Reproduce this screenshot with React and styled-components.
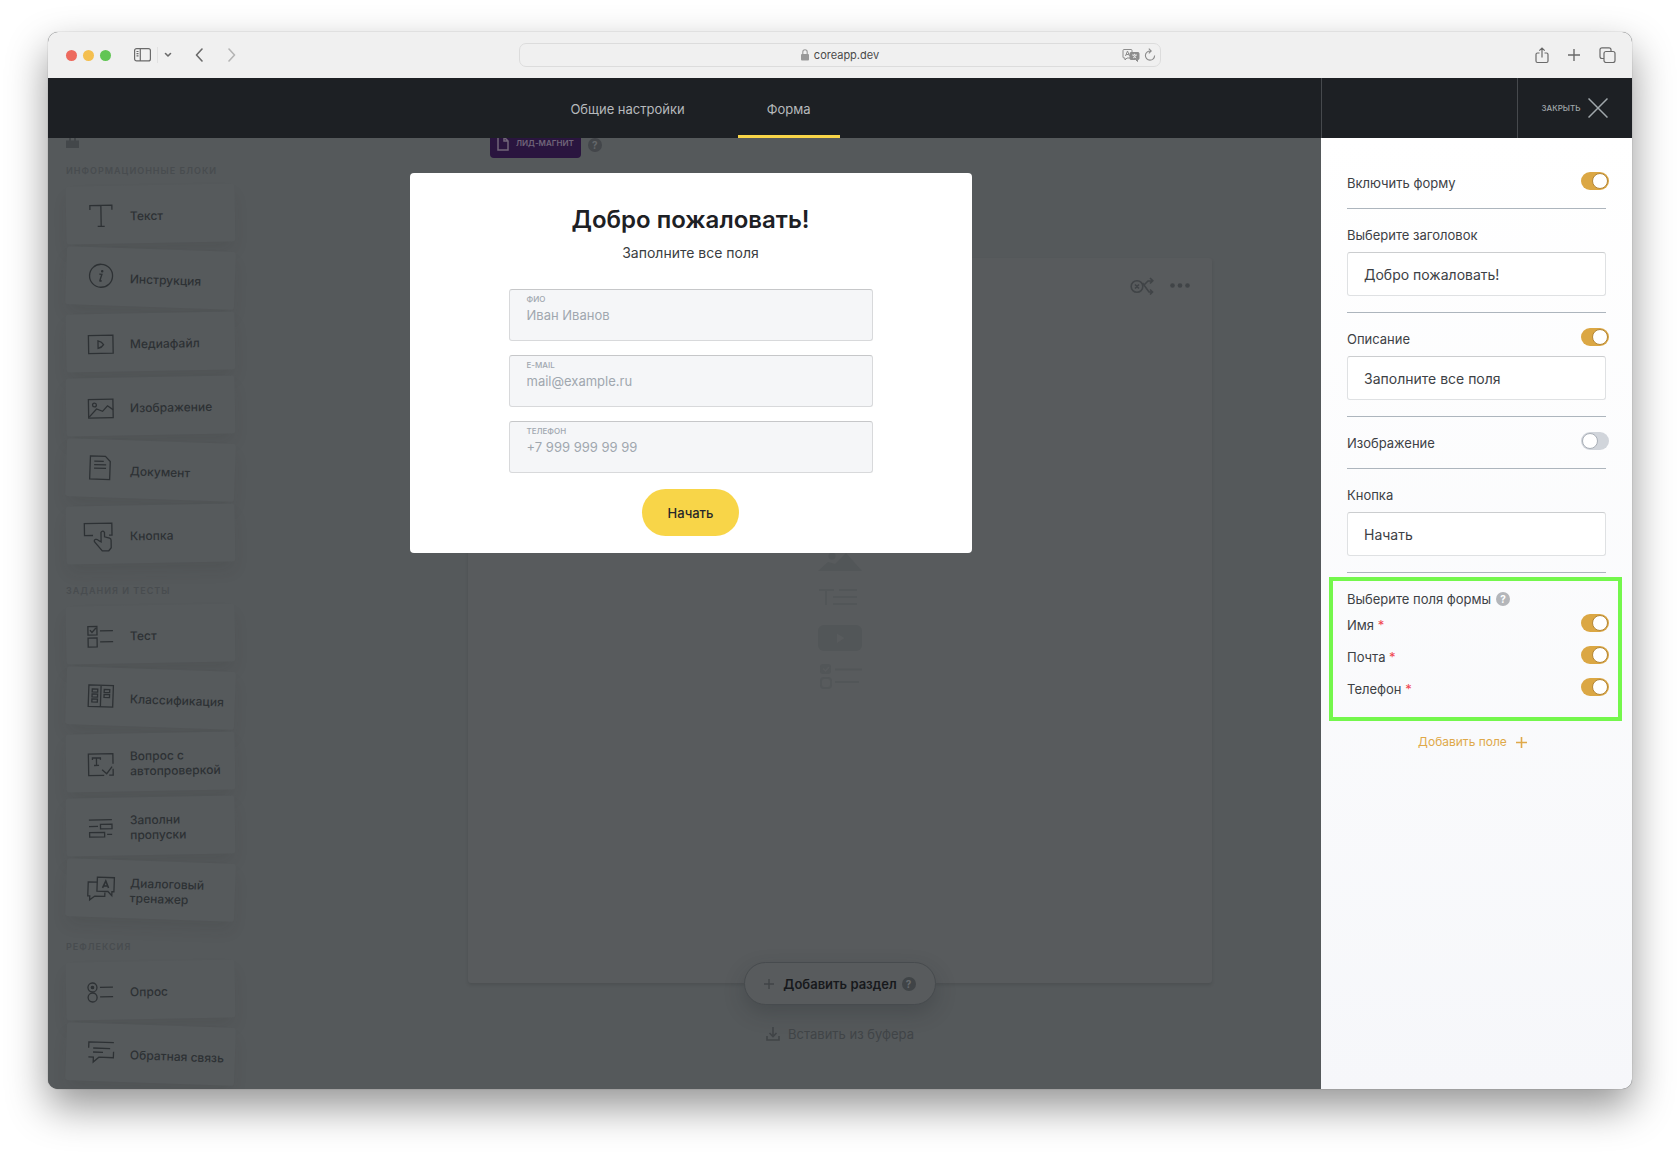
import React from "react";
import styled, { createGlobalStyle } from "styled-components";

const GlobalStyle = createGlobalStyle`
  *, *::before, *::after { box-sizing: border-box; }
  body { margin: 0; background: #ffffff; font-family: Inter, "Noto Sans", sans-serif; }
  button, input { font-family: inherit; }
`;

/* ---------- window ---------- */

const Desktop = styled.div`
  min-height: 100vh;
  padding: 32px 48px 64px;
  display: flex;
  flex-direction: column;
`;

const BrowserWindow = styled.div`
  flex: 1;
  display: flex;
  flex-direction: column;
  overflow: hidden;
  border-radius: 10px;
  background: #55595b;
  box-shadow: 0 0 1px rgba(0, 0, 0, 0.5), 0 18px 40px rgba(0, 0, 0, 0.42);
`;

const TitleBar = styled.div`
  height: 46px;
  display: grid;
  grid-template-columns: 1fr minmax(300px, 642px) 1fr;
  align-items: center;
  background: #f0f0f0;
`;

const BarGroup = styled.div`
  display: flex;
  align-items: center;
  justify-content: ${(p) => (p.$end ? "flex-end" : "flex-start")};
  gap: ${(p) => p.$gap}px;
  padding: 0 ${(p) => (p.$end ? 16 : 18)}px;
`;

const Cluster = styled.div`
  display: flex;
  align-items: center;
  gap: 6px;
`;

const Light = styled.span`
  width: 11px;
  height: 11px;
  border-radius: 50%;
  background: ${(p) => p.$color};
`;

const BarButton = styled.button`
  display: flex;
  padding: 0;
  border: 0;
  background: none;
  color: ${(p) => (p.$faint ? "#b4b4b4" : "#6a6a6a")};
`;

const BarRule = styled.span`
  width: 1px;
  height: 16px;
  background: #e2e2e2;
`;

const Address = styled.div`
  height: 24px;
  display: grid;
  grid-template-columns: 1fr auto 1fr;
  align-items: center;
  padding: 0 4px;
  border: 1px solid #dcdcdc;
  border-radius: 7px;
  color: #8c8c8c;
`;

const Host = styled.div`
  grid-column: 2;
  display: flex;
  align-items: center;
  gap: 5px;
  font-size: 11px;
  line-height: 16px;
  color: #4a4a4a;
`;

const AddressTools = styled.div`
  display: flex;
  justify-content: flex-end;
  align-items: center;
  gap: 4px;
`;

/* ---------- application header ---------- */

const Header = styled.header`
  height: 60px;
  display: flex;
  background: #1d2024;
`;

const Tabs = styled.nav`
  flex: 1;
  display: flex;
  justify-content: center;
  gap: 24px;
  padding-left: 12px;
`;

const Tab = styled.a`
  display: flex;
  align-items: center;
  padding: 4px 29px 0;
  border-bottom: 3px solid ${(p) => (p.$active ? "#f8d548" : "transparent")};
  font-size: 13px;
  line-height: 20px;
  color: #b6b9bc;
  text-decoration: none;
`;

const HeaderSide = styled.div`
  width: 311px;
  display: flex;
  justify-content: flex-end;
  border-left: 1px solid #46494d;
`;

const CloseButton = styled.button`
  width: 115px;
  display: flex;
  align-items: center;
  justify-content: center;
  gap: 8px;
  padding: 0;
  border: 0;
  border-left: 1px solid #46494d;
  background: none;
  font-size: 8px;
  font-weight: 500;
  color: #a0a7ab;
`;

/* ---------- body ---------- */

const Body = styled.div`
  flex: 1;
  display: flex;
`;

const Stage = styled.main`
  position: relative;
  flex: 1;
  display: flex;
  overflow: hidden;
  background: #55595b;
`;

const Sidebar = styled.aside`
  width: 311px;
  display: flex;
  flex-direction: column;
  gap: 20px;
  padding-left: 18px;
`;

const SidebarTop = styled.div`
  height: 5px;
  display: flex;
  color: #43474a;
`;

const Group = styled.section`
  width: 169px;
  display: flex;
  flex-direction: column;
  gap: 6px;
`;

const GroupTitle = styled.h2`
  margin: 0;
  font-size: 9px;
  line-height: 16px;
  font-weight: 600;
  letter-spacing: 1px;
  white-space: nowrap;
  color: #484c4f;
`;

const BlockCard = styled.button`
  height: 58px;
  display: flex;
  align-items: center;
  gap: 15px;
  padding: 2px 0 0 21px;
  border: 0;
  border-radius: 3px;
  background: #565a5c;
  box-shadow: 0 10px 16px -2px rgba(36, 40, 43, 0.1);
  font-size: 12px;
  line-height: 15px;
  font-weight: 500;
  text-align: left;
  white-space: pre-line;
  color: #2d3134;
  transform: rotate(${(p) => (p.$down ? 2 : -1)}deg);

  svg { flex: none; }
`;

const Workspace = styled.div`
  flex: 1;
  display: flex;
  flex-direction: column;
  align-items: center;
  padding: 0 109px;
`;

const LeadRow = styled.div`
  align-self: stretch;
  height: 20px;
  display: flex;
  align-items: flex-end;
  gap: 7px;
  padding-left: 22px;
`;

const LeadButton = styled.button`
  height: 30px;
  display: flex;
  align-items: center;
  gap: 7px;
  padding: 0 7px;
  border: 0;
  border-radius: 4px;
  background: #2a153f;
  font-size: 8px;
  font-weight: 600;
  color: #716579;
`;

const Hint = styled.span`
  width: 14px;
  height: 14px;
  display: flex;
  align-items: center;
  justify-content: center;
  border-radius: 50%;
  background: ${(p) => p.$bg};
  font-size: 10px;
  line-height: 14px;
  font-weight: 700;
  color: ${(p) => p.$color};
`;

const LeadHint = styled(Hint)`
  margin-bottom: 6px;
`;

const Canvas = styled.div`
  align-self: stretch;
  flex: 1;
  display: flex;
  flex-direction: column;
  margin-top: 100px;
  border-radius: 3px;
  background: #585b5d;
  box-shadow: 0 2px 3px rgba(40, 44, 47, 0.18);
`;

const CanvasTools = styled.div`
  height: 56px;
  display: flex;
  align-items: center;
  justify-content: flex-end;
  gap: 16px;
  padding: 0 22px;
  color: #404447;
`;

const Hints = styled.div`
  flex: 1;
  display: flex;
  flex-direction: column;
  align-items: center;
  justify-content: center;
  gap: 12px;
  padding-bottom: 62px;
  color: #525658;
`;

const CanvasFooter = styled.div`
  height: 106px;
  display: flex;
  flex-direction: column;
  align-items: center;
`;

const AddSection = styled.button`
  width: 192px;
  height: 43px;
  flex: none;
  display: flex;
  align-items: center;
  justify-content: center;
  gap: 5px;
  margin-top: -21px;
  border: 1px solid #474b4e;
  border-radius: 22px;
  background: #585b5d;
  box-shadow: 0 8px 20px rgba(36, 40, 43, 0.25);
  font-size: 13px;
  font-weight: 600;
  color: #17191c;

  svg { margin-right: 4px; color: #404447; }
`;

const Paste = styled.button`
  display: flex;
  align-items: center;
  gap: 8px;
  margin-top: 19px;
  padding: 0;
  border: 0;
  background: none;
  font-size: 13px;
  line-height: 20px;
  color: #404447;
`;

/* ---------- form dialog ---------- */

const Overlay = styled.div`
  position: absolute;
  inset: 0;
  display: flex;
  justify-content: center;
  align-items: flex-start;
  padding: 35px 0 0 12px;
`;

const Dialog = styled.form`
  width: 562px;
  display: flex;
  flex-direction: column;
  align-items: center;
  padding: 31px 99px 17px;
  border-radius: 4px;
  background: #ffffff;
`;

const DialogTitle = styled.h1`
  margin: 0;
  font-size: 24px;
  line-height: 32px;
  font-weight: 600;
  color: #1d2024;
`;

const DialogText = styled.p`
  margin: 7px 0 26px;
  font-size: 14px;
  line-height: 20px;
  color: #3a3d41;
`;

const Fields = styled.div`
  align-self: stretch;
  display: flex;
  flex-direction: column;
  gap: 14px;
`;

const Field = styled.label`
  height: 52px;
  display: flex;
  flex-direction: column;
  padding: 4px 17px;
  border: 1px solid #d8d9db;
  border-top-color: #c6c7c9;
  border-radius: 3px;
  background: #f5f6f8;
  font-size: 8px;
  line-height: 10px;
  font-weight: 500;
  color: #a0a7af;
`;

const FieldInput = styled.input`
  width: 100%;
  height: 22px;
  padding: 0;
  border: 0;
  outline: 0;
  background: none;
  font-size: 13px;
  line-height: 22px;
  color: #a0a7af;

  &::placeholder { color: #a0a7af; opacity: 1; }
`;

const StartButton = styled.button`
  width: 97px;
  height: 47px;
  margin-top: 16px;
  border: 0;
  border-radius: 24px;
  background: #f8d548;
  font-size: 13px;
  font-weight: 500;
  color: #26272a;
`;

/* ---------- settings panel ---------- */

const Panel = styled.aside`
  width: 311px;
  padding: 19px 26px 0;
  background: linear-gradient(#ffffff, #f6f7fa);
`;

const Section = styled.div`
  display: flex;
  flex-direction: column;
  gap: 7px;
  padding: 16px 0 ${(p) => (p.$bare ? 15 : 16)}px;
  border-bottom: 1px solid #adb5bd;
`;

const Row = styled.div`
  height: ${(p) => p.$height || 20}px;
  display: flex;
  align-items: center;
  justify-content: ${(p) => (p.$start ? "flex-start" : "space-between")};
  gap: 5px;
  font-size: 13px;
  line-height: 20px;
  color: #3d4145;
`;

const Required = styled.span`
  color: #f0454f;
`;

const Switch = styled.input`
  appearance: none;
  flex: none;
  width: 28px;
  height: 18px;
  display: flex;
  justify-content: flex-start;
  margin: 0 -3px 4px 0;
  padding: 1px;
  border-radius: 9px;
  background: #d1d5db;

  &::before {
    content: "";
    width: 16px;
    height: 16px;
    border: 1px solid #a9afb7;
    border-radius: 50%;
    background: #ffffff;
  }

  &:checked { justify-content: flex-end; background: #dba744; }
  &:checked::before { border-color: #b48636; }
`;

const TextBox = styled.input`
  width: 100%;
  height: 44px;
  padding: 0 16px;
  border: 1px solid #dfe1e3;
  border-top-color: #cbcdcf;
  border-radius: 3px;
  outline: 0;
  background: #ffffff;
  font-size: 14px;
  color: #3d4145;
`;

const Highlight = styled.div`
  margin: 4px -16px 0 -18px;
  padding: 8px 12px 12px 14px;
  border: 4px solid #74f74c;
`;

const AddField = styled.button`
  width: 100%;
  display: flex;
  align-items: center;
  justify-content: center;
  gap: 9px;
  margin-top: 11px;
  padding: 0 8px 0 0;
  border: 0;
  background: none;
  font-size: 12px;
  line-height: 20px;
  color: #dfa94a;
`;

/* ---------- icons ---------- */

const Icon = ({ w = 28, h = w, sw = 1.3, children }) => (
  <svg width={w} height={h} viewBox={`0 0 ${w} ${h}`} fill="none" stroke="currentColor" strokeWidth={sw} aria-hidden="true">
    {children}
  </svg>
);

const blockIcons = {
  text: <path d="M3 8V3.5h22V8M14 3.5v21M10.5 24.5h7" />,
  info: (
    <>
      <circle cx="14" cy="12.5" r="11.5" />
      <path d="M12.2 11h2.6l-1.8 6.2q-.2 1.3 1.8.2" />
      <circle cx="15" cy="8" r=".6" fill="currentColor" />
    </>
  ),
  media: <path d="M1.5 5.500h24.500v18H1.500zM11 11v7.500q4-1 5.500-3.700Q15 12 11 11z" />,
  image: (
    <>
      <path d="M1.500 5.500h24.500v18.500H1.500z" />
      <circle cx="7.500" cy="11" r="1.900" />
      <path d="M2 23l7.500-8 6 2.500L20.500 12l5.500 4" />
    </>
  ),
  doc: <path d="M3 1h15l5 5v18H3zM7 6h9.500M7 9.500h12M7 13h12" />,
  button: (
    <>
      <path d="M6 13.500H-2.500V1.500H25v12h-3" />
      <path d="M14 18V10.500q1.700-2.500 3.500 0V15l5 1.500q1.500.600 1.500 2V26l-2.500 3H15l-7.500-9q-1-2 1-2.500t3 1.200L14 20z" />
    </>
  ),
  test: <path d="M1 4.500h9v8.500H1zM1 16h9v9H1zM3 8l2 2.500L9 6M13 9h13M13 20h13" />,
  classes: (
    <path d="M1.500 2h24.500v21.500H1.500zM13.700 2v21.500M5 6h5.500v3H5zM5 11h5.500v3H5zM5 16h5.500v3H5zM17 6h5.500v3H17zM17 11h5.500v3H17z" />
  ),
  question: (
    <path d="M26 14V4H1.500v21.500H17M22 25.500h4V19M5.500 10V8h8v2M9.500 8v7.500M7 15.500h5M15 20l4.500 4L25 17" />
  ),
  gaps: <path d="M2 6h23M2 12.500h9M13.500 10.500H25v4.500H13.500zM2.500 18.500H17.500V23H2.500zM20 20.700h5" />,
  dialog: (
    <>
      <path d="M10 2h17v14h-2v4l-4-4H10z" />
      <path d="M10 7H1v14h2v4l5-4h10v-4" />
      <path d="M15.500 12.500L18.500 5.500l3 7M16.500 10.500h4" strokeWidth="1.600" />
    </>
  ),
  poll: (
    <>
      <circle cx="5.500" cy="9.500" r="4.500" />
      <circle cx="5.500" cy="19.500" r="4.500" />
      <circle cx="5.500" cy="9.500" r="1.200" fill="currentColor" />
      <path d="M13 9.500h13M13 19h13" />
    </>
  ),
  feedback: <path d="M1.500 9V3h25M26.500 12v6H12l-5.500 5V18h-5M6 9h17M6 13h10" />,
};

const Chevron = ({ d, w = 9, h = 14 }) => (
  <Icon w={w} h={h} sw={1.6}><path d={d} strokeLinecap="round" strokeLinejoin="round" /></Icon>
);

const Plus = ({ size = 11, sw = 1.4 }) => (
  <Icon w={size} sw={sw}><path d={`M${size / 2} 0V${size}M0 ${size / 2}H${size}`} /></Icon>
);

/* ---------- data ---------- */

const groups = [
  {
    title: "ИНФОРМАЦИОННЫЕ БЛОКИ",
    items: [
      ["text", "Текст"],
      ["info", "Инструкция", true],
      ["media", "Медиафайл"],
      ["image", "Изображение"],
      ["doc", "Документ", true],
      ["button", "Кнопка"],
    ],
  },
  {
    title: "ЗАДАНИЯ И ТЕСТЫ",
    items: [
      ["test", "Тест"],
      ["classes", "Классификация", true],
      ["question", "Вопрос с\nавтопроверкой"],
      ["gaps", "Заполни\nпропуски"],
      ["dialog", "Диалоговый\nтренажер", true],
    ],
  },
  {
    title: "РЕФЛЕКСИЯ",
    items: [
      ["poll", "Опрос"],
      ["feedback", "Обратная связь", true],
    ],
  },
];

const formFields = [
  ["name", "ФИО", "Иван Иванов", "text"],
  ["email", "E-MAIL", "mail@example.ru", "email"],
  ["phone", "ТЕЛЕФОН", "+7 999 999 99 99", "tel"],
];

const toggles = [
  ["use-name", "Имя"],
  ["use-email", "Почта"],
  ["use-phone", "Телефон"],
];

/* ---------- parts ---------- */

const Chrome = () => (
  <TitleBar>
    <BarGroup $gap={23}>
      <Cluster>
        <Light $color="#ed6a5e" />
        <Light $color="#f4bf4f" />
        <Light $color="#61c554" />
      </Cluster>
      <Cluster>
        <BarButton aria-label="Боковая панель">
          <Icon w={17} h={14} sw={1.2}>
            <rect x=".6" y=".6" width="15.800" height="12.300" rx="2" />
            <path d="M6.300.600v12.300M2.500 3.500h2M2.500 5.700h2M2.500 7.900h2" />
          </Icon>
        </BarButton>
        <BarRule />
        <BarButton aria-label="Группы вкладок">
          <Chevron w={8} h={6} d="M1.500 1.500L4 4l2.500-2.500" />
        </BarButton>
      </Cluster>
      <BarButton aria-label="Назад"><Chevron d="M7 1L1.500 7 7 13" /></BarButton>
      <BarButton $faint aria-label="Вперёд"><Chevron d="M2 1l5.500 6L2 13" /></BarButton>
    </BarGroup>
    <Address>
      <Host>
        <svg width="8" height="12" viewBox="0 0 8 12" aria-hidden="true">
          <rect y="5" width="8" height="6.500" rx="1" fill="#999" />
          <path d="M1.800 5.500V3a2.200 2.200 0 0 1 4.400 0v2.500" fill="none" stroke="#999" strokeWidth="1.100" />
        </svg>
        coreapp.dev
      </Host>
      <AddressTools>
        <Icon w={18} h={14} sw={1}>
          <path d="M8 10H5l-2 2v-2H2Q1 10 1 9V2.500q0-1 1-1h7q1 0 1 1V4M3.500 8l2-5 2 5M4.200 6.500h2.600" />
          <path d="M9 4.500h7q1 0 1 1v5q0 1-1 1h-.500v2L13.500 11.500H9q-1 0-1-1v-5q0-1 1-1z" fill="currentColor" />
          <path d="M10 7h5M12.500 5.800v1.200M11 10q2.500-1 3-3M14.200 10q-2-1-2.800-3" stroke="#f0f0f0" strokeWidth=".8" />
        </Icon>
        <Icon w={12} h={14} sw={1.100}>
          <path d="M6.500 3A4.600 4.600 0 1 0 10.600 7.500M4.800.700L7.200 3 4.800 5.300" />
        </Icon>
      </AddressTools>
    </Address>
    <BarGroup $end $gap={19}>
      <BarButton aria-label="Поделиться">
        <Icon w={14} h={17} sw={1.2}>
          <path d="M4.500 6H2.500Q1 6 1 7.500V14q0 1.500 1.500 1.500h9Q13 15.500 13 14V7.500Q13 6 11.500 6h-2M7 10.500V1.200M4.300 3.700L7 1l2.700 2.700" />
        </Icon>
      </BarButton>
      <BarButton aria-label="Новая вкладка"><Plus size={12} /></BarButton>
      <BarButton aria-label="Обзор вкладок">
        <Icon w={17} h={16} sw={1.2}>
          <rect x="5" y="4.500" width="11" height="11" rx="2" />
          <path d="M5 11.500H3Q1 11.500 1 9.500V2.800Q1 .800 3 .800h7q2 0 2 2v1.700" />
        </Icon>
      </BarButton>
    </BarGroup>
  </TitleBar>
);

const Blocks = () => (
  <Sidebar>
    <SidebarTop>
      <Icon w={13} h={11}>
        <path d="M0 2.500h13V10H0zM3 0h2v3H3zM8 0h2v3H8z" fill="currentColor" stroke="none" />
      </Icon>
    </SidebarTop>
    {groups.map((group) => (
      <Group key={group.title}>
        <GroupTitle>{group.title}</GroupTitle>
        {group.items.map(([icon, label, down]) => (
          <BlockCard key={icon} type="button" $down={down}>
            <svg width="28" height="28" viewBox="0 0 28 28" fill="none" stroke="currentColor" strokeWidth="1.300" overflow="visible" aria-hidden="true">
              {blockIcons[icon]}
            </svg>
            {label}
          </BlockCard>
        ))}
      </Group>
    ))}
  </Sidebar>
);

const Lesson = () => (
  <Workspace>
    <LeadRow>
      <LeadButton type="button">
        <Icon w={12} h={15} sw={1.500}><path d="M1 1h6l4 4v9H1zM7 1v4h4" /></Icon>
        ЛИД-МАГНИТ
      </LeadButton>
      <LeadHint $bg="#43464a" $color="#63676a">?</LeadHint>
    </LeadRow>
    <Canvas>
      <CanvasTools>
        <Icon w={24} h={18} sw={1.600}>
          <circle cx="7" cy="9.500" r="5.800" />
          <path d="M5 7.500l4 4M9 7.500l-4 4M12.500 6l6.500 9h3M20 12.500l2.500 2.500L20 17.500M14.500 7.500L18 4h4M20 1l2.800 2.800L20 6.500" />
        </Icon>
        <Icon w={20} h={6}>
          <g fill="currentColor" stroke="none">
            <circle cx="2.500" cy="2.500" r="2.300" />
            <circle cx="10" cy="2.500" r="2.300" />
            <circle cx="17.500" cy="2.500" r="2.300" />
          </g>
        </Icon>
      </CanvasTools>
      <Hints>
        <Icon w={44} h={28}>
          <path d="M0 27l10-9 7 2L28 9l16 18z" fill="currentColor" stroke="none" />
          <circle cx="14" cy="12" r="3.500" fill="currentColor" stroke="none" />
        </Icon>
        <Icon w={44} h={28} sw={2}><path d="M1 6h15M8 6v15M21 6h18M15 13h24M15 20h24" /></Icon>
        <Icon w={44} h={28}>
          <rect y="1" width="44" height="26" rx="6" fill="currentColor" stroke="none" />
          <path d="M19 9.500l7.500 4.500-7.500 5z" fill="#585b5d" stroke="none" />
        </Icon>
        <Icon w={44} h={28} sw={2}>
          <rect x="2" y="0" width="11" height="10" rx="3" fill="currentColor" stroke="none" />
          <path d="M5 4.500L7.500 7 11 3" stroke="#585b5d" strokeWidth="1.500" />
          <rect x="3" y="14" width="10" height="10" rx="3" />
          <path d="M17 5.500h27M17 18h24" />
        </Icon>
      </Hints>
    </Canvas>
    <CanvasFooter>
      <AddSection type="button">
        <Plus size={10} />
        Добавить раздел
        <Hint $bg="#404447" $color="#686c6f">?</Hint>
      </AddSection>
      <Paste type="button">
        <Icon w={14} h={14} sw={1.600}><path d="M1 9v4h12V9M7 0v9M3.500 6L7 9.500 10.500 6" /></Icon>
        Вставить из буфера
      </Paste>
    </CanvasFooter>
  </Workspace>
);

const LeadForm = () => (
  <Overlay>
    <Dialog onSubmit={(e) => e.preventDefault()}>
      <DialogTitle>Добро пожаловать!</DialogTitle>
      <DialogText>Заполните все поля</DialogText>
      <Fields>
        {formFields.map(([id, label, hint, type]) => (
          <Field key={id} htmlFor={id}>
            {label}
            <FieldInput id={id} type={type} placeholder={hint} />
          </Field>
        ))}
      </Fields>
      <StartButton>Начать</StartButton>
    </Dialog>
  </Overlay>
);

const Settings = () => (
  <Panel>
    <Section $bare>
      <Row>
        <label htmlFor="enable">Включить форму</label>
        <Switch id="enable" type="checkbox" defaultChecked />
      </Row>
    </Section>
    <Section>
      <Row><label htmlFor="title">Выберите заголовок</label></Row>
      <TextBox id="title" defaultValue="Добро пожаловать!" />
    </Section>
    <Section>
      <Row>
        <label htmlFor="description">Описание</label>
        <Switch type="checkbox" aria-label="Показывать описание" defaultChecked />
      </Row>
      <TextBox id="description" defaultValue="Заполните все поля" />
    </Section>
    <Section $bare>
      <Row>
        <label htmlFor="picture">Изображение</label>
        <Switch id="picture" type="checkbox" />
      </Row>
    </Section>
    <Section>
      <Row><label htmlFor="caption">Кнопка</label></Row>
      <TextBox id="caption" defaultValue="Начать" />
    </Section>
    <Highlight>
      <Row $start>
        Выберите поля формы
        <Hint $bg="#b4b6ba" $color="#ffffff">?</Hint>
      </Row>
      {toggles.map(([id, label]) => (
        <Row key={id} $height={32}>
          <label htmlFor={id}>{label} <Required>*</Required></label>
          <Switch id={id} type="checkbox" defaultChecked />
        </Row>
      ))}
    </Highlight>
    <AddField type="button">
      Добавить поле
      <Plus size={11} sw={1.600} />
    </AddField>
  </Panel>
);

export default function App() {
  return (
    <Desktop>
      <GlobalStyle />
      <BrowserWindow>
        <Chrome />
        <Header>
          <Tabs>
            <Tab href="#general">Общие настройки</Tab>
            <Tab href="#form" $active>Форма</Tab>
          </Tabs>
          <HeaderSide>
            <CloseButton type="button">
              ЗАКРЫТЬ
              <Icon w={20} sw={1.500}><path d="M.500.500l19 19M19.500.500l-19 19" /></Icon>
            </CloseButton>
          </HeaderSide>
        </Header>
        <Body>
          <Stage>
            <Blocks />
            <Lesson />
            <LeadForm />
          </Stage>
          <Settings />
        </Body>
      </BrowserWindow>
    </Desktop>
  );
}
